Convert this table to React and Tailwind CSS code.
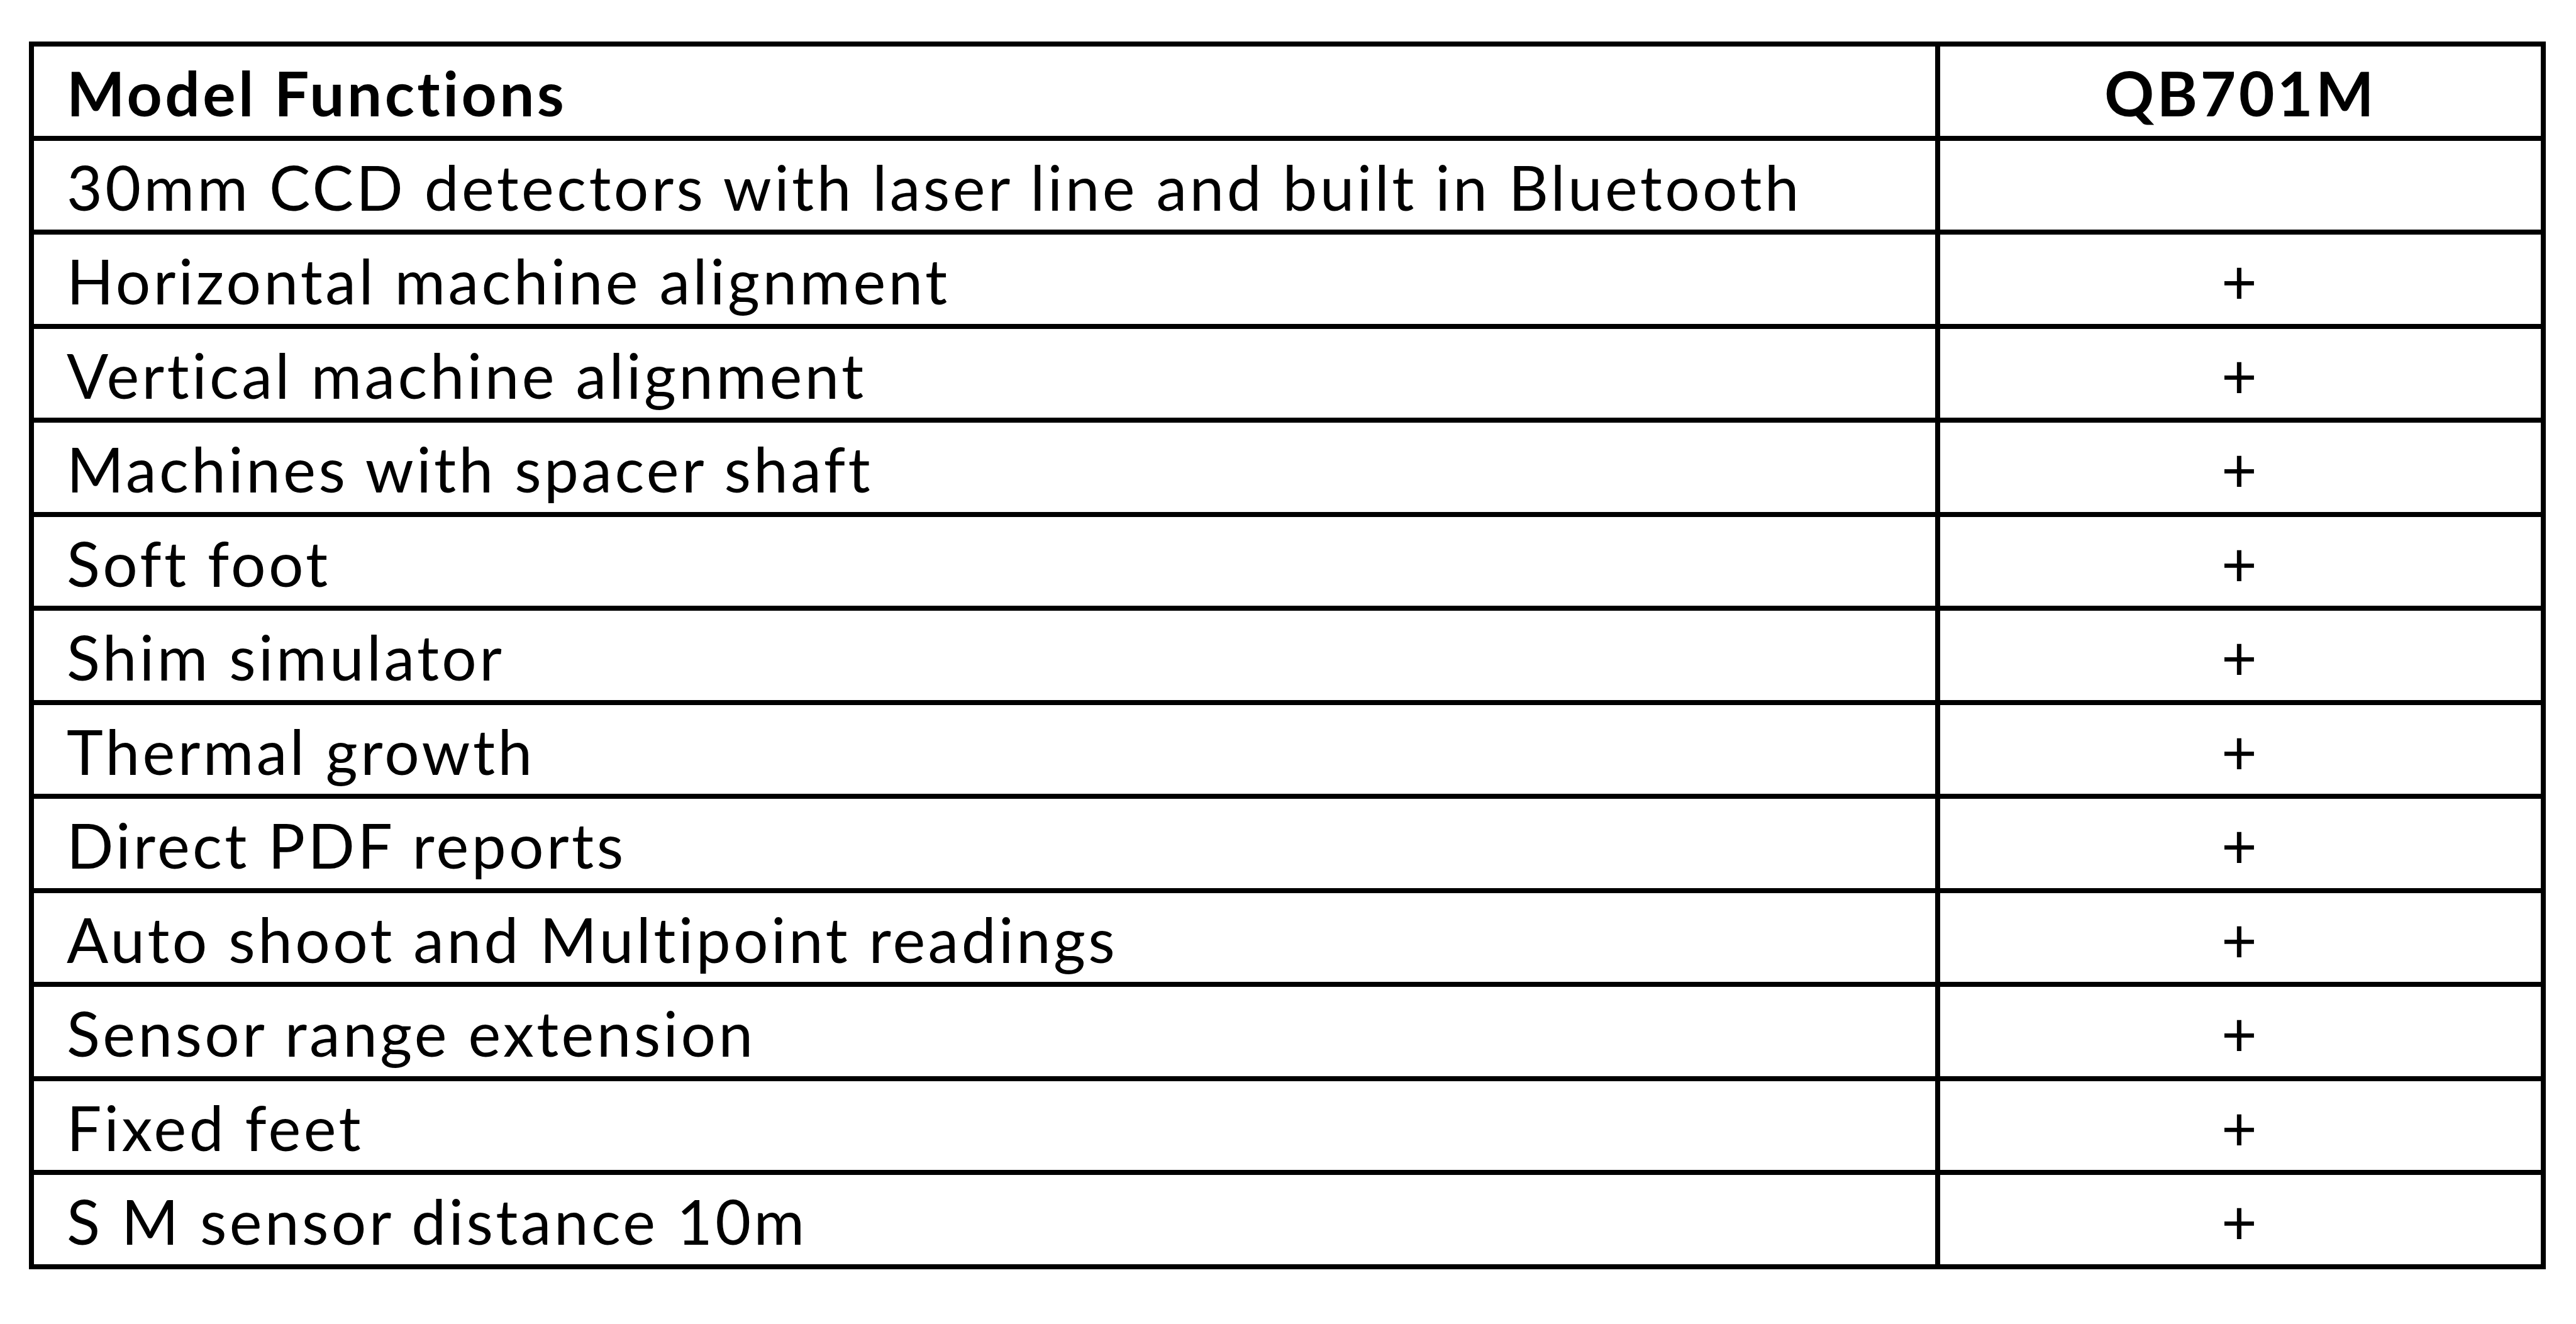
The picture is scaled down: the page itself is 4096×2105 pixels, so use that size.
import React from 'react';

const rows = [
  { name: 'Model Functions', value: 'QB701M', header: true },
  { name: '30mm CCD detectors with laser line and built in Bluetooth', value: '' },
  { name: 'Horizontal machine alignment', value: '+' },
  { name: 'Vertical machine alignment', value: '+' },
  { name: 'Machines with spacer shaft', value: '+' },
  { name: 'Soft foot', value: '+' },
  { name: 'Shim simulator', value: '+' },
  { name: 'Thermal growth', value: '+' },
  { name: 'Direct PDF reports', value: '+' },
  { name: 'Auto shoot and Multipoint readings', value: '+' },
  { name: 'Sensor range extension', value: '+' },
  { name: 'Fixed feet', value: '+' },
  { name: 'S M sensor distance 10m', value: '+' },
];

const App = () => {
  return (
    <div className="min-h-screen w-full bg-white pl-[46px] pt-[66px] text-black" style={{ fontFamily: 'Lato, sans-serif' }}>
      <div className="w-[4002px] border-[8px] border-black">
        {rows.map((row, index) => (
          <div
            key={row.name}
            className={`flex h-[141.5px] ${index > 0 ? 'box-content border-t-[8px] border-black' : ''}`}
          >
            <div
              className={`w-[3023px] pl-[52px] pt-[24px] text-[98px] leading-none tracking-[4.4px] whitespace-nowrap ${row.header ? 'font-bold' : 'font-normal'}`}
            >
              {row.name}
            </div>
            <div
              className={`flex-1 border-l-[8px] border-black pt-[24px] text-center text-[98px] leading-none tracking-[4.4px] ${row.header ? 'font-bold' : 'font-normal'}`}
            >
              {row.value}
            </div>
          </div>
        ))}
      </div>
    </div>
  );
};

export default App;
